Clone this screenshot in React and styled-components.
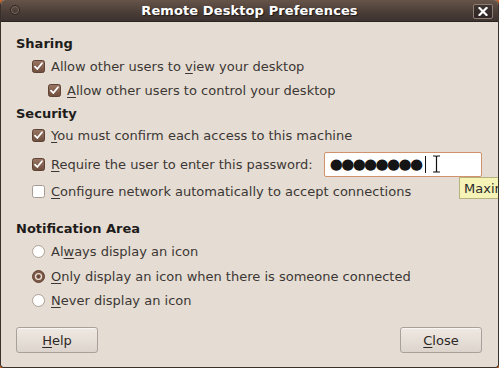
import React from "react";
import styled, { createGlobalStyle } from "styled-components";

const Global = createGlobalStyle`
  html, body { margin: 0; padding: 0; background: #c9662a; }
  body { font-family: "DejaVu Sans", "Liberation Sans", sans-serif; }
`;

const Win = styled.div`
  position: relative;
  width: 499px;
  height: 368px;
  box-sizing: border-box;
  background: #e5ddd3;
  border: 1px solid #3a302c;
  border-top: none;
  border-radius: 5px 5px 4px 4px;
  display: flex;
  flex-direction: column;
  overflow: hidden;
`;

const TitleBar = styled.div`
  height: 22px;
  flex: 0 0 22px;
  margin: 0 -1px;
  border-radius: 5px 5px 0 0;
  background: linear-gradient(#665449, #4a3d37 60%, #3d332f);
  border-bottom: 1px solid #2c2421;
  display: flex;
  align-items: center;
  position: relative;
  box-sizing: border-box;
`;

const Title = styled.div`
  flex: 1;
  text-align: center;
  color: #ffffff;
  font-weight: bold;
  font-size: 13px;
  text-shadow: 1px 1px 1px #1e1816;
  letter-spacing: 0.1px;
`;

const MenuDot = styled.div`
  position: absolute;
  left: 10px;
  top: 5px;
  width: 10px;
  height: 10px;
  border-radius: 50%;
  border: 1px solid #2e2623;
  box-shadow: inset 0 0 0 1px #7a6a60;
  box-sizing: border-box;
`;

const CloseBtn = styled.div`
  position: absolute;
  right: 6px;
  top: 4px;
  width: 20px;
  height: 15px;
  box-sizing: border-box;
  border: 1px solid #8d7d72;
  border-radius: 2px;
  background: linear-gradient(#3e3430, #2e2624);
  display: flex;
  align-items: center;
  justify-content: center;
`;

const Body = styled.div`
  flex: 1;
  display: flex;
  flex-direction: column;
  padding: 9px 0 0 15px;
  color: #3c3735;
  font-size: 13px;
`;

const Heading = styled.div`
  height: ${(p) => p.h}px;
  display: flex;
  align-items: center;
  font-weight: bold;
  color: #1e1c1b;
`;

const Row = styled.div`
  height: ${(p) => p.h}px;
  display: flex;
  align-items: center;
  padding-left: ${(p) => p.indent}px;
  gap: 6px;
  white-space: nowrap;
`;

const Spacer = styled.div`
  height: ${(p) => p.h}px;
`;

const U = styled.span`
  text-decoration: underline;
  text-underline-offset: 2px;
`;

const Entry = styled.div`
  position: relative;
  margin-left: 5px;
  width: 158px;
  height: 25px;
  box-sizing: border-box;
  background: #ffffff;
  border: 1px solid #d0916d;
  border-radius: 2px;
  display: flex;
  align-items: center;
  padding-left: 5px;
  font-size: 15px;
  color: #151515;
  letter-spacing: -1.6px;
`;

const Caret = styled.span`
  display: inline-block;
  width: 1px;
  height: 17px;
  background: #111;
  margin-left: 3px;
`;

const IBeam = styled.svg`
  position: absolute;
  left: 107px;
  top: 2px;
`;

const Tooltip = styled.div`
  position: absolute;
  left: 458px;
  top: 177px;
  height: 22px;
  padding: 0 6px 0 4px;
  box-sizing: border-box;
  background: #f5f4b6;
  border: 1px solid #b7b17b;
  font-size: 13px;
  color: #2a2a2a;
  display: flex;
  align-items: center;
  white-space: nowrap;
`;

const ButtonBar = styled.div`
  display: flex;
  justify-content: space-between;
  padding: 0 16px 0 0;
  margin-top: 17px;
`;

const Button = styled.div`
  width: 82px;
  height: 26px;
  box-sizing: border-box;
  border: 1px solid #a8a09a;
  border-radius: 3px;
  background: linear-gradient(#efe9e3, #e6dfd8 50%, #dcd4cc);
  box-shadow: inset 0 1px 0 #f8f5f2;
  display: flex;
  align-items: center;
  justify-content: center;
  color: #2c2826;
  font-size: 13px;
`;

const Check = ({ on }) => (
  <svg width="13" height="13" viewBox="0 0 13 13" style={{ flex: "0 0 13px" }}>
    <defs>
      <linearGradient id="cg" x1="0" y1="0" x2="0" y2="1">
        <stop offset="0" stopColor="#9a7764" />
        <stop offset="1" stopColor="#6e4e3e" />
      </linearGradient>
    </defs>
    {on ? (
      <>
        <rect x="0.5" y="0.5" width="12" height="12" rx="2" fill="url(#cg)" stroke="#5e4335" />
        <path d="M3 6.6 L5.3 9 L10 3.2" fill="none" stroke="#ffffff" strokeWidth="1.8" strokeLinecap="round" strokeLinejoin="round" />
      </>
    ) : (
      <rect x="0.5" y="0.5" width="12" height="12" rx="2" fill="#ffffff" stroke="#a59b93" />
    )}
  </svg>
);

const Radio = ({ on }) => (
  <svg width="13" height="13" viewBox="0 0 13 13" style={{ flex: "0 0 13px" }}>
    {on ? (
      <>
        <circle cx="6.5" cy="6.5" r="6" fill="#7d5a48" stroke="#5e4335" />
        <circle cx="6.5" cy="6.5" r="3.6" fill="#efe2da" />
        <circle cx="6.5" cy="6.5" r="2.2" fill="#6b4a3a" />
      </>
    ) : (
      <circle cx="6.5" cy="6.5" r="6" fill="#ffffff" stroke="#aaa198" />
    )}
  </svg>
);

export default function App() {
  return (
    <>
      <Global />
      <Win>
        <TitleBar>
          <MenuDot />
          <Title>Remote Desktop Preferences</Title>
          <CloseBtn>
            <svg width="10" height="9" viewBox="0 0 10 9">
              <path d="M1.5 1 L8.5 8 M8.5 1 L1.5 8" stroke="#ffffff" strokeWidth="2.2" strokeLinecap="square" />
            </svg>
          </CloseBtn>
        </TitleBar>
        <Body>
          <Heading h={24}>Sharing</Heading>
          <Row h={22} indent={16}>
            <Check on />
            <span>Allow other users to <U>v</U>iew your desktop</span>
          </Row>
          <Row h={26} indent={32}>
            <Check on />
            <span><U>A</U>llow other users to control your desktop</span>
          </Row>
          <Heading h={20}>Security</Heading>
          <Row h={24} indent={16}>
            <Check on />
            <span><U>Y</U>ou must confirm each access to this machine</span>
          </Row>
          <Row h={34} indent={16}>
            <Check on />
            <span><U>R</U>equire the user to enter this password:</span>
            <Entry>
              ●●●●●●●●
              <Caret />
              <IBeam width="9" height="18" viewBox="0 0 9 18">
                <path d="M1 1 H3.5 Q4.5 1 4.5 2 Q4.5 1 5.5 1 H8 M1 17 H3.5 Q4.5 17 4.5 16 Q4.5 17 5.5 17 H8 M4.5 2 V16" fill="none" stroke="#ffffff" strokeWidth="3" />
                <path d="M1 1 H3.5 Q4.5 1 4.5 2 Q4.5 1 5.5 1 H8 M1 17 H3.5 Q4.5 17 4.5 16 Q4.5 17 5.5 17 H8 M4.5 2 V16" fill="none" stroke="#111" strokeWidth="1.2" />
              </IBeam>
            </Entry>
          </Row>
          <Row h={20} indent={16}>
            <Check />
            <span><U>C</U>onfigure network automatically to accept connections</span>
          </Row>
          <Spacer h={15} />
          <Heading h={24}>Notification Area</Heading>
          <Row h={22} indent={16}>
            <Radio />
            <span>Al<U>w</U>ays display an icon</span>
          </Row>
          <Row h={28} indent={16}>
            <Radio on />
            <span><U>O</U>nly display an icon when there is someone connected</span>
          </Row>
          <Row h={20} indent={16}>
            <Radio />
            <span><U>N</U>ever display an icon</span>
          </Row>
          <ButtonBar>
            <Button><span><U>H</U>elp</span></Button>
            <Button><span><U>C</U>lose</span></Button>
          </ButtonBar>
        </Body>
        <Tooltip>Maximum length is 8 characters</Tooltip>
      </Win>
    </>
  );
}
